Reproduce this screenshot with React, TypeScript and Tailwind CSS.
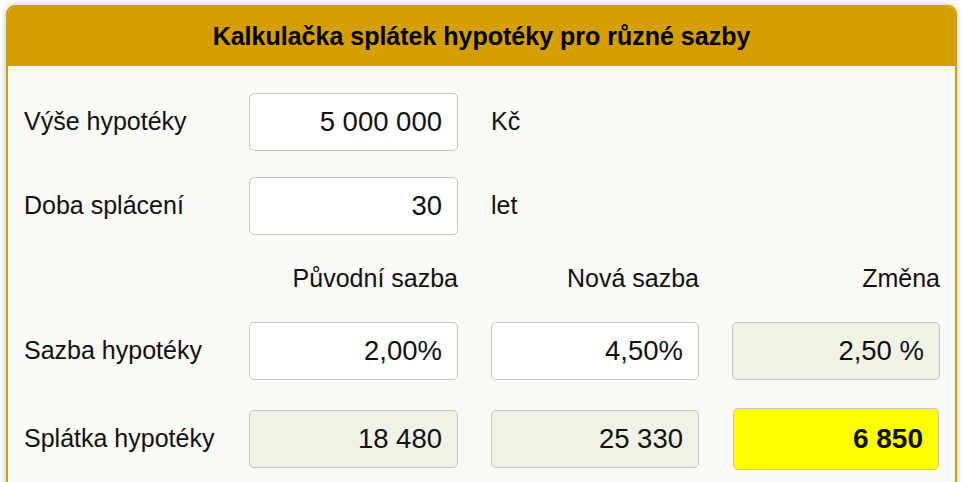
export default function App() {
  const cols = "grid grid-cols-[192px_209px_208px_208px] gap-x-[33px] items-center";
  const input =
    "h-[58px] rounded-[5px] border border-[#c4c4c4] bg-white flex items-center justify-end pr-[15px] text-[27.5px]";
  const ro =
    "h-[58px] rounded-[5px] border border-[#c4c4c4] bg-[#f0f2e6] flex items-center justify-end pr-[15px] text-[27.5px]";

  return (
    <div className="w-[962px] h-[482px] overflow-hidden bg-white pl-[6px] pt-[5px] text-[#111]" style={{ fontFamily: '"Liberation Sans", Arial, sans-serif' }}>
      <div className="w-[951px] h-[520px] rounded-t-[9px] border-2 border-[#d59e00] bg-[#f9f9f5] shadow-[0_0_6px_rgba(0,0,0,0.25)] overflow-hidden">
        <div className="h-[59px] bg-[#d59e00] flex items-center justify-center text-[25px] font-bold text-black">
          Kalkulačka splátek hypotéky pro různé sazby
        </div>
        <div className="pl-[16px] text-[25px]">
          <div className={`${cols} mt-[27px]`}>
            <div className="whitespace-nowrap">Výše hypotéky</div>
            <div className={input}>5 000 000</div>
            <div>Kč</div>
          </div>
          <div className={`${cols} mt-[26px]`}>
            <div className="whitespace-nowrap">Doba splácení</div>
            <div className={input}>30</div>
            <div>let</div>
          </div>
          <div className={`${cols} mt-[22px] h-[44px]`}>
            <div />
            <div className="text-right">Původní sazba</div>
            <div className="text-right">Nová sazba</div>
            <div className="text-right">Změna</div>
          </div>
          <div className={`${cols} mt-[21px]`}>
            <div className="whitespace-nowrap">Sazba hypotéky</div>
            <div className={input}>2,00%</div>
            <div className={input}>4,50%</div>
            <div className={ro}>2,50 %</div>
          </div>
          <div className={`${cols} mt-[30px]`}>
            <div className="whitespace-nowrap">Splátka hypotéky</div>
            <div className={ro}>18 480</div>
            <div className={ro}>25 330</div>
            <div className="h-[62px] -my-[2px] ml-[1px] w-[206px] rounded-[5px] border border-[#c4c4c4] bg-[#ffff00] flex items-center justify-end pr-[15px] text-[28px] font-bold">
              6 850
            </div>
          </div>
        </div>
      </div>
    </div>
  );
}
